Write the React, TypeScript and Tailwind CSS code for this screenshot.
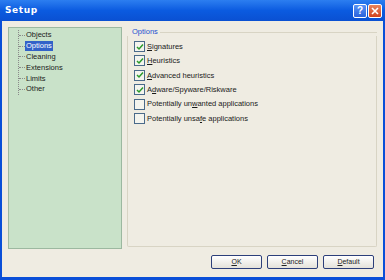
import React from 'react';

const treeItems = ['Objects', 'Options', 'Cleaning', 'Extensions', 'Limits', 'Other'];

const options = [
  { label: 'Signatures', key: 'S', checked: true },
  { label: 'Heuristics', key: 'H', checked: true },
  { label: 'Advanced heuristics', key: 'A', checked: true },
  { label: 'Adware/Spyware/Riskware', key: 'd', checked: true },
  { label: 'Potentially unwanted applications', key: 'w', checked: false },
  { label: 'Potentially unsafe applications', key: 'f', checked: false },
];

function Underlined({ text, ch }: { text: string; ch: string }) {
  const i = text.indexOf(ch);
  if (i < 0) return <>{text}</>;
  return (
    <>
      {text.slice(0, i)}
      <span className="underline">{ch}</span>
      {text.slice(i + 1)}
    </>
  );
}

function CheckBox({ checked }: { checked: boolean }) {
  return (
    <div className="w-[11px] h-[11px] border border-[#4a6a8a] bg-[#f4f4ee] flex items-center justify-center shrink-0">
      {checked && (
        <svg width="8" height="8" viewBox="0 0 8 8">
          <path d="M1 4 L3 6 L7 1.5" stroke="#2a9a2a" strokeWidth="1.5" fill="none" />
        </svg>
      )}
    </div>
  );
}

function Button({ children }: { children: React.ReactNode }) {
  return (
    <button className="w-[51px] h-[14px] rounded-[2px] border border-[#2c3f7a] bg-gradient-to-b from-white to-[#e4e2da] text-[7px] text-[#222] flex items-center justify-center">
      {children}
    </button>
  );
}

export default function App() {
  return (
    <div className="w-[385px] h-[280px] flex flex-col bg-[#0a4fd8] font-['Liberation_Sans',sans-serif]">
      {/* Title bar */}
      <div className="h-[21px] flex items-center justify-between pl-[5px] pr-[3px] bg-gradient-to-b from-[#2c7ef0] via-[#0b5be0] to-[#0a50d2]">
        <span className="text-white font-bold text-[9px] tracking-[0.6px] font-['DejaVu_Sans',sans-serif]">Setup</span>
        <div className="flex gap-[1px]">
          <div className="w-[14px] h-[14px] rounded-[2px] border border-white bg-gradient-to-b from-[#5a93f5] to-[#2a62dc] text-white text-[10px] font-bold flex items-center justify-center leading-none">?</div>
          <div className="w-[14px] h-[14px] rounded-[2px] border border-white bg-gradient-to-b from-[#e8845c] to-[#d0421c] flex items-center justify-center">
            <svg width="8" height="8" viewBox="0 0 8 8">
              <path d="M1 1 L7 7 M7 1 L1 7" stroke="white" strokeWidth="1.6" />
            </svg>
          </div>
        </div>
      </div>

      {/* Body */}
      <div className="flex-1 mx-[2px] mb-[3px] bg-[#efece2] flex flex-col px-[6px] pt-[6px] pb-[8px]">
        <div className="flex-1 flex gap-[5px]">
          {/* Tree */}
          <div className="w-[114px] mb-[-2px] border border-[#9cb8a0] bg-[#c9e2c9] pt-[2px] pl-[9px] text-[7.5px] text-[#1a1a1a]">
            <div className="border-l border-dotted border-[#8a8a8a] flex flex-col">
              {treeItems.map((t) => (
                <div key={t} className="flex items-center h-[10.8px]">
                  <div className="w-[6px] border-t border-dotted border-[#8a8a8a]" />
                  <span
                    className={
                      t === 'Options'
                        ? 'bg-[#3262c8] text-white px-[1px] leading-[10px]'
                        : 'px-[1px] leading-[10px]'
                    }
                  >
                    {t}
                  </span>
                </div>
              ))}
            </div>
          </div>

          {/* Options group */}
          <div className="flex-1 flex flex-col">
            <div className="text-[7.5px] text-[#1d4fd0] pl-[5px] leading-[9px] h-[9px] flex items-center gap-[2px]">
              <span>Options</span>
              <div className="flex-1 border-t border-[#d8d4c4] mt-[1px]" />
            </div>
            <div className="flex-1 border border-t-0 border-[#d8d4c4] rounded-b-[2px] pl-[6px] pt-[5px] flex flex-col gap-[3.4px] text-[7.5px] text-[#1a1a1a]">
              {options.map((o) => (
                <div key={o.label} className="flex items-center gap-[2px] h-[11px]">
                  <CheckBox checked={o.checked} />
                  <span>
                    <Underlined text={o.label} ch={o.key} />
                  </span>
                </div>
              ))}
            </div>
          </div>
        </div>

        {/* Buttons */}
        <div className="flex justify-end gap-[5px] mt-[8px] pr-[3px]">
          <Button>
            <span className="underline">O</span>K
          </Button>
          <Button>
            <span className="underline">C</span>ancel
          </Button>
          <Button>
            <span className="underline">D</span>efault
          </Button>
        </div>
      </div>
    </div>
  );
}
